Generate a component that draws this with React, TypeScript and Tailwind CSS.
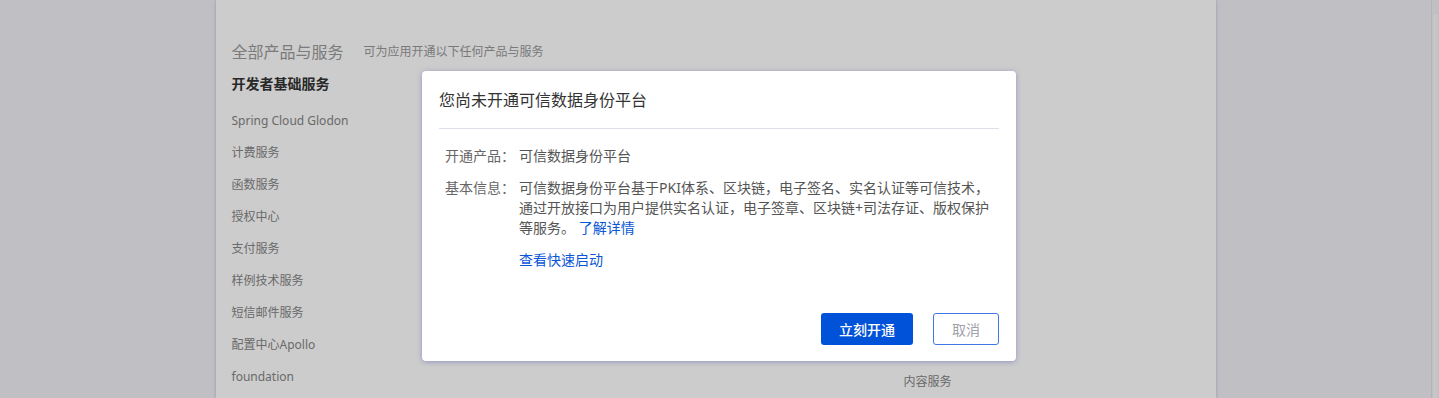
import React from "react";

const font = { fontFamily: '"Noto Sans", "Noto Sans CJK SC", sans-serif' };

const items = [
  "Spring Cloud Glodon",
  "计费服务",
  "函数服务",
  "授权中心",
  "支付服务",
  "样例技术服务",
  "短信邮件服务",
  "配置中心Apollo",
  "foundation",
];

export default function App() {
  return (
    <div className="relative flex h-[398px] w-full overflow-hidden bg-[#f0eff5]" style={font}>
      {/* page */}
      <div className="flex flex-1 justify-center">
        <div className="h-full w-[1000px] bg-white px-4 pt-[40px] shadow-[0_0_3px_rgba(120,125,190,0.45)]">
          <div className="flex h-6 items-center">
            <span className="text-[16px] leading-6 text-[#9a9a9a]">全部产品与服务</span>
            <span className="ml-5 text-[12px] leading-6 text-[#999]">可为应用开通以下任何产品与服务</span>
          </div>
          <div className="flex">
            <div className="w-[336px]">
              <div className="mt-[10px] text-[14px] font-semibold leading-5 text-[#333]">开发者基础服务</div>
              <ul className="mt-[11px]">
                {items.map((t) => (
                  <li key={t} className="h-8 text-[12px] leading-8 text-[#858585]">
                    {t}
                  </li>
                ))}
              </ul>
            </div>
            <div className="w-[336px]" />
            <div className="w-[296px] pt-[302px]">
              <div className="h-8 text-[12px] leading-8 text-[#858585]">内容服务</div>
            </div>
          </div>
        </div>
      </div>
      {/* scrollbar */}
      <div className="w-[8px] border-l border-[#e2e2e6] pt-[14px]">
        <div className="ml-[1px] h-full w-[5px] rounded-t-[3px] bg-[#f8f8fa]" />
      </div>

      {/* overlay */}
      <div className="absolute inset-0 bg-black/20" />

      {/* modal */}
      <div className="absolute left-[422px] top-[71px] w-[594px] rounded-[4px] bg-white px-[17px] pb-4 pt-[17px] shadow-[0_1px_5px_rgba(90,95,190,0.5)]">
        <div className="pb-4 text-[16px] leading-6 text-[#333]">您尚未开通可信数据身份平台</div>
        <div className="h-px bg-[#dedfec]" />
        <div className="mt-[17px] pl-[6px] text-[14px] leading-5">
          <div className="flex">
            <div className="w-[74px] text-[#666]">开通产品：</div>
            <div className="text-[#555]">可信数据身份平台</div>
          </div>
          <div className="mt-3 flex">
            <div className="w-[74px] text-[#666]">基本信息：</div>
            <div className="text-[#555]">
              <div className="whitespace-nowrap">可信数据身份平台基于PKI体系、区块链，电子签名、实名认证等可信技术，</div>
              <div className="whitespace-nowrap">通过开放接口为用户提供实名认证，电子签章、区块链+司法存证、版权保护</div>
              <div className="whitespace-nowrap">
                等服务。 <span className="text-[#0a56d6]">了解详情</span>
              </div>
            </div>
          </div>
          <div className="mt-3 flex">
            <div className="w-[74px]" />
            <div className="text-[#0a56d6]">查看快速启动</div>
          </div>
        </div>
        <div className="mt-[43px] flex justify-end gap-5">
          <button className="h-8 w-[92px] rounded-[3px] bg-[#0052d9] text-[14px] font-medium text-white">
            立刻开通
          </button>
          <button className="h-8 w-[66px] rounded-[3px] border border-[#3f78e6] bg-white text-[14px] text-[#a0a0a8]">
            取消
          </button>
        </div>
      </div>
    </div>
  );
}
